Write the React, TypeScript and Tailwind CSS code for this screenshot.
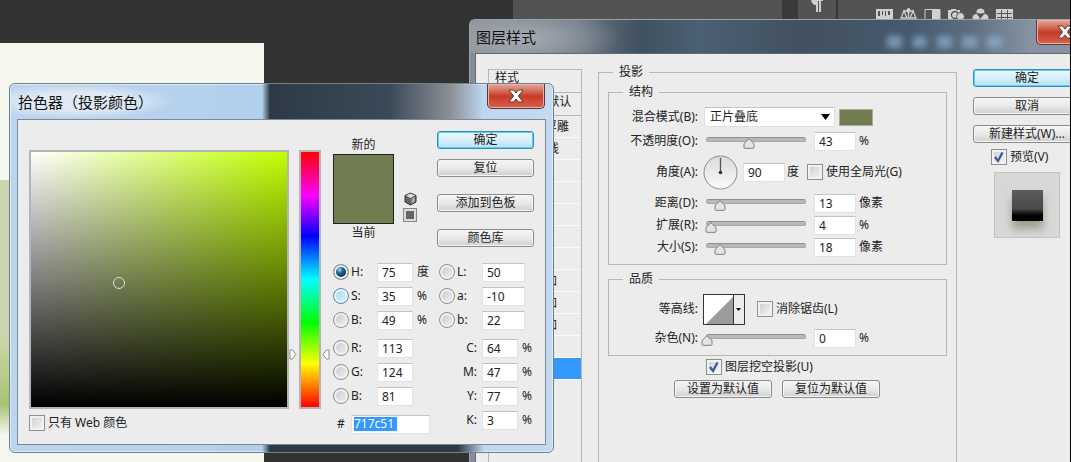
import { ReactNode, useState } from 'react'

const font = "font-['Noto_Sans','Noto_Sans_CJK_SC',sans-serif]"
const inputStyle = 'h-[19px] border border-[#e2e2e2] border-t-[#c4c4c4] bg-white px-1 text-[12px] leading-4 text-[#222] outline-none'

const CloseX = () => (
  <svg width="18" height="14" viewBox="0 0 18 14">
    <path d="M2 1h4.6L9 4l2.4-3H16l-4.6 6 4.6 6h-4.6L9 10l-2.4 3H2l4.6-6z" fill="#fff" stroke="#5c3a38" strokeWidth="1" />
  </svg>
)

const CloseButton = () => (
  <button aria-label="close" className="flex h-[25px] w-[58px] shrink-0 items-center justify-center rounded-b-[5px] border border-t-0 border-[#5f3634] bg-linear-to-b from-[#dfa89c] from-0% via-[#c63a24] via-50% to-[#d9604a] shadow-[inset_0_0_0_1px_#e9b3a8]">
    <CloseX />
  </button>
)

const Button = ({ children, primary }: { children: ReactNode, primary?: boolean }) => (
  <button className={primary
    ? 'h-[18px] w-full shrink-0 rounded-[3px] border border-[#2f8fbc] bg-linear-to-b from-[#eaf8fe] via-[#d8eff9] via-50% to-[#b5e1f4] text-[12px] leading-4 shadow-[inset_0_0_0_1px_#5fd0f5]'
    : 'h-[18px] w-full shrink-0 rounded-[3px] border border-[#8a8a8a] bg-linear-to-b from-[#f5f5f5] via-[#e9e9e9] via-50% to-[#cfcfcf] text-[12px] leading-4 whitespace-nowrap shadow-[inset_0_0_0_1px_#f6f6f6]'}>
    {children}
  </button>
)

const Checkbox = ({ label, checked = false }: { label: string, checked?: boolean }) => {
  const [on, setOn] = useState(checked)
  return (
    <label className="flex items-center gap-[3px] whitespace-nowrap">
      <span className="relative flex h-4 w-4 shrink-0">
        <input type="checkbox" checked={on} onChange={() => setOn(!on)} className="h-4 w-4 appearance-none border border-[#8e8f8f] bg-linear-to-br from-[#c8cdd4] to-[#f8f8f8] shadow-[inset_0_0_0_2px_#f1f1f1]" />
        {on && (
          <svg className="pointer-events-none absolute inset-0" width="16" height="16" viewBox="0 0 16 16">
            <path d="M4 8l3 4 4.500-8.500" fill="none" stroke="#3c559c" strokeWidth="2.200" />
          </svg>
        )}
      </span>
      {label}
    </label>
  )
}

const Slider = ({ label, value }: { label: string, value: number }) => {
  const [pos, setPos] = useState(value)
  return (
    <div className="relative h-[18px] w-[100px] shrink-0 pt-[5px]">
      <div className="h-[5px] rounded-full border border-t-[#8f8f8f] border-[#a6a6a6] bg-[#b9b9b9]" />
      <svg className="absolute top-[6px] -ml-[6px]" style={{ left: `${pos}%` }} width="12" height="11" viewBox="0 0 12 11">
        <path d="M6 .7L11 5.500v3.800q0 1-1 1H2q-1 0-1-1V5.500z" fill="#e4e4e4" stroke="#7d7d7d" />
      </svg>
      <input aria-label={label} type="range" value={pos} onChange={(e) => setPos(Number(e.target.value))} className="absolute inset-0 w-full opacity-0" />
    </div>
  )
}

const Group = ({ title, className, inner, children }: { title: string, className: string, inner?: boolean, children: ReactNode }) => (
  <fieldset className={`min-w-0 border border-[#b7b7b7] ${className}`}>
    <legend className={`px-[6px] text-[12px] leading-4 ${inner ? 'ml-[14px]' : 'ml-[5px]'}`}>{title}</legend>
    {children}
  </fieldset>
)

const SliderRow = ({ label, pos, value, unit }: { label: string, pos: number, value: string, unit: string }) => (
  <div className="flex h-[22px] items-center">
    <span className="w-[89px] shrink-0 text-right">{label}</span>
    <div className="ml-2"><Slider label={label} value={pos} /></div>
    <input aria-label={label} defaultValue={value} className={`${inputStyle} ml-2 w-[42px]`} />
    <span className="ml-[3px]">{unit}</span>
  </div>
)

const effects = [
  { name: '斜面和浮雕' },
  { name: '等高线', sub: true },
  { name: '' },
  { name: '' },
  { name: '' },
  { name: '' },
  { name: '' },
  { name: '颜色叠加' },
  { name: '渐变叠加' },
  { name: '图案叠加' },
  { name: '' },
  { name: '', active: true },
]

const EffectList = () => (
  <div className="w-[94px] shrink-0 overflow-hidden border border-[#b7b7b7]">
    <div className="h-[23px] border-b border-[#b7b7b7] pl-[6px] leading-4">样式</div>
    <div className="h-[23px] border-b border-[#b7b7b7] pl-[7px] leading-[18px] whitespace-nowrap">混合选项:默认</div>
    {effects.map((e, i) => (
      <div key={i} className={`flex h-[22px] items-center border-b border-[#fafafa] whitespace-nowrap ${e.sub ? 'pl-[34px]' : 'pl-[20px]'} ${e.active ? 'bg-[#3399ff] text-white' : ''}`}>
        {e.name}
      </div>
    ))}
  </div>
)

const AdjustmentIcons = () => (
  <div className="flex gap-[7px] pt-2 pl-[38px]">
    <svg width="17" height="14" viewBox="0 0 17 14" fill="#d0d0d0"><path fillRule="evenodd" d="M0 1h17v12H0zM2 3v5h2V3zm4 0v4h1V3zm3 0v5h1V3zm3 0v4h2V3z" /></svg>
    <svg width="17" height="14" viewBox="0 0 17 14" fill="none" stroke="#d0d0d0" strokeWidth="1.300"><path d="M8.500 0v12M3 3h11M4 3l-3 7h6zM13 3l-3 7h6zM6 12h5" /><circle cx="8.500" cy="2.500" r="1.500" fill="#d0d0d0" /></svg>
    <svg width="17" height="14" viewBox="0 0 17 14"><path d="M1 1.500h15v11H1z" fill="none" stroke="#d0d0d0" /><path d="M8 1h8v12H8z" fill="#d0d0d0" /></svg>
    <svg width="17" height="14" viewBox="0 0 17 14"><path d="M0 2h3V1h5v1h4v11H0z" fill="#d0d0d0" /><circle cx="7" cy="7" r="3.500" fill="none" stroke="#535353" strokeWidth="1.300" /><circle cx="12.500" cy="8.500" r="4" fill="#d0d0d0" stroke="#535353" /></svg>
    <svg width="17" height="14" viewBox="0 0 17 14" fill="#d0d0d0" stroke="#535353"><circle cx="8.500" cy="4.500" r="4.500" /><circle cx="4.500" cy="10" r="4.500" /><circle cx="12.500" cy="10" r="4.500" /><path d="M5.500 6h6l-3 4z" fill="#535353" /></svg>
    <svg width="17" height="14" viewBox="0 0 17 14"><path d="M0 1h17v12H0z" fill="#d0d0d0" /><path d="M1 5.500h15M1 9.500h15M5.500 2v10M11.500 2v10" stroke="#535353" /></svg>
  </div>
)

// document canvas and the docked panels behind the dialogs
const Workspace = () => (
  <div className="flex h-full">
    <div className="flex flex-1 pt-[43px]">
      <div className="w-[264px] bg-[#f6f7ee] pt-[137px]">
        <div className="h-[255px] bg-linear-to-b from-[#cbd7af] from-60% via-[#a9c373] via-88% to-[#f6f7ee]" />
      </div>
    </div>
    <div className="w-[269px] bg-[#535353]" />
    <div className="w-4 bg-[#3a3a3a]" />
    <div className="w-[38px] bg-[#535353] pl-[13px]">
      <svg width="13" height="13" viewBox="0 0 13 13"><path d="M0 0h12v1h-2v11H8V1H7v11H5V5Q1 5 0 0z" fill="#cfcfcf" /></svg>
    </div>
    <div className="w-[2px] bg-[#383838]" />
    <div className="w-[232px] bg-[#535353]"><AdjustmentIcons /></div>
  </div>
)

const LayerStyleDialog = () => (
  <div className="absolute top-[19px] -right-[29px] -bottom-[30px] left-[469px] flex flex-col rounded-t-[6px] border border-[#9aa3ab] bg-[linear-gradient(to_right,#868d96_0,#6b7783_110px,#40505f_170px,#4b6073_230px,#42505f_330px,#465a6e_440px,#5d6d7f_500px,#8593a3_560px,#8593a3)]">
    <div className="flex h-[33px] shrink-0 items-start justify-between bg-[radial-gradient(ellipse_100px_32px_at_50px_18px,#a8adb4,transparent)] pl-[6px]">
      <h1 className="pt-[6px] text-[15px] leading-[22px] text-[#111]">图层样式</h1>
      <div className="flex">
        <div className="mt-4 mr-[34px] flex gap-[10px] blur-[3px]">
          <i className="h-3 w-[15px] bg-[#8fb0d2]/70" />
          <i className="h-3 w-[15px] rounded-full bg-[#8fb0d2]/70" />
          <i className="h-3 w-[15px] bg-[#8fb0d2]/70" />
          <i className="h-3 w-[15px] bg-[#8fb0d2]/70" />
          <i className="h-3 w-[15px] bg-[#8fb0d2]/70" />
        </div>
        <div className="mr-1"><CloseButton /></div>
      </div>
    </div>
    <div className="mx-[5px] flex flex-1 gap-4 border border-[#5f6a75] bg-[#ececec] pt-[15px] pr-[11px] pl-3">
      <EffectList />
      <div className="-mt-[5px] flex flex-1 flex-col">
        <Group title="投影" className="flex-1 px-[9px]">
          <div className="flex flex-col gap-[6px] pt-1">
            <Group inner title="结构" className="pt-[6px] pb-[6px]">
              <div className="flex flex-col gap-[2px]">
                <div className="flex h-[22px] items-center">
                  <label htmlFor="blend" className="w-[89px] shrink-0 text-right">混合模式(B):</label>
                  <div className="relative ml-[6px]">
                    <select id="blend" className="block h-5 w-[131px] appearance-none border border-[#dedede] border-t-[#c4c4c4] bg-white px-[5px] text-[12px] leading-4">
                      <option>正片叠底</option>
                    </select>
                    <svg className="pointer-events-none absolute top-[7px] right-[5px]" width="9" height="6"><path d="M0 0h9L4.500 6z" /></svg>
                  </div>
                  <button aria-label="投影颜色" className="ml-1 h-[17px] w-[34px] border border-[#a9ab9f] bg-[#717c51]" />
                </div>
                <SliderRow label="不透明度(O):" pos={43} value="43" unit="%" />
                <div className="flex h-9 items-center">
                  <label htmlFor="angle" className="w-[89px] shrink-0 text-right">角度(A):</label>
                  <svg className="ml-[5px] shrink-0" width="35" height="35" viewBox="0 0 35 35">
                    <defs><linearGradient id="dial" x2="0" y2="1"><stop stopColor="#dadada" /><stop offset="1" stopColor="#fafafa" /></linearGradient></defs>
                    <circle cx="17.500" cy="17.500" r="16.500" fill="url(#dial)" stroke="#8c8c8c" />
                    <path d="M17.500 3v15" stroke="#555" strokeWidth="1.300" />
                    <circle cx="17.500" cy="17.500" r="1.800" fill="#333" />
                  </svg>
                  <input id="angle" defaultValue="90" className={`${inputStyle} ml-[5px] w-[42px]`} />
                  <span className="ml-[2px] mr-2">度</span>
                  <Checkbox label="使用全局光(G)" />
                </div>
                <div>
                  <SliderRow label="距离(D):" pos={14} value="13" unit="像素" />
                  <SliderRow label="扩展(R):" pos={5} value="4" unit="%" />
                  <SliderRow label="大小(S):" pos={14} value="18" unit="像素" />
                </div>
              </div>
            </Group>
            <Group inner title="品质" className="pt-[6px] pb-[6px]">
              <div className="flex flex-col gap-[2px]">
                <div className="flex h-8 items-center">
                  <span className="w-[89px] shrink-0 text-right">等高线:</span>
                  <button aria-label="等高线" className="ml-[5px] mr-3 flex h-[31px] w-[42px] border border-[#333] bg-white">
                    <svg width="40" height="29" viewBox="0 0 40 29">
                      <path d="M2 29L29 2v27z" fill="#9b9b9b" />
                      <path d="M29 0h11v29H29z" fill="#ececec" />
                      <path d="M29.500 0v29" stroke="#333" />
                      <path d="M32 13h5l-2.500 3z" />
                    </svg>
                  </button>
                  <Checkbox label="消除锯齿(L)" />
                </div>
                <SliderRow label="杂色(N):" pos={1} value="0" unit="%" />
              </div>
            </Group>
          </div>
          <div className="mt-[2px] ml-[98px] flex h-[18px]"><Checkbox checked label="图层挖空投影(U)" /></div>
          <div className="mt-1 ml-[66px] flex gap-[10px]">
            <div className="w-[98px]"><Button>设置为默认值</Button></div>
            <div className="w-[98px]"><Button>复位为默认值</Button></div>
          </div>
        </Group>
      </div>
      <div className="flex w-[108px] shrink-0 flex-col">
        <div className="flex flex-col gap-[10px]">
          <Button primary>确定</Button>
          <Button>取消</Button>
          <Button>新建样式(W)...</Button>
        </div>
        <div className="mt-[6px] ml-[18px] flex h-4"><Checkbox checked label="预览(V)" /></div>
        <div className="mt-[7px] ml-[21px] flex h-[66px] w-[66px] items-center justify-center border border-[#c3c3c3] bg-[#d7d7d7]">
          <div className="h-[31px] w-[31px] bg-linear-to-b from-[#5c5c5c] via-[#4a4a4a] via-60% to-black to-90% shadow-[0_8px_8px_#9da18e]" />
        </div>
      </div>
    </div>
  </div>
)

const Radio = ({ id, checked, hover }: { id: string, checked?: boolean, hover?: boolean }) => (
  <input
    type="radio" name="channel" id={id} defaultChecked={checked}
    className={`h-4 w-4 shrink-0 appearance-none rounded-full border shadow-[inset_0_0_0_2px_#f2f2f2] ${hover ? 'border-[#4a8fb5] bg-linear-to-br from-[#9bd9f7] to-[#dff4fd]' : 'border-[#8e8f8f] bg-linear-to-br from-[#c3c6ca] to-[#f4f4f4]'} checked:bg-[radial-gradient(circle_at_40%_35%,#9fe0f5_0,#1c6c96_25%,#0c2f4d_60%)]`}
  />
)

const channels = [
  [
    { id: 'h', label: 'H:', value: '75', unit: '度', checked: true },
    { id: 's', label: 'S:', value: '35', unit: '%', hover: true },
    { id: 'b', label: 'B:', value: '49', unit: '%' },
  ],
  [
    { id: 'r', label: 'R:', value: '113' },
    { id: 'g', label: 'G:', value: '124' },
    { id: 'bl', label: 'B:', value: '81' },
  ],
]
const lab = [
  { id: 'l', label: 'L:', value: '50' },
  { id: 'la', label: 'a:', value: '-10' },
  { id: 'lb', label: 'b:', value: '22' },
]
const cmyk = [['C:', '64'], ['M:', '47'], ['Y:', '77'], ['K:', '3']]

const ChannelRow = ({ c, wide }: { c: any, wide?: boolean }) => (
  <div className="flex h-6 items-center">
    <Radio id={c.id} checked={c.checked} hover={c.hover} />
    <label htmlFor={c.id} className={wide ? 'ml-[2px] w-[25px]' : 'ml-[2px] w-[26px]'}>{c.label}</label>
    <input aria-label={c.label} defaultValue={c.value} className={`${inputStyle} ${wide ? 'w-[43px]' : 'w-9'}`} />
    {c.unit && <span className="ml-1">{c.unit}</span>}
  </div>
)

const ColorPickerDialog = () => (
  <div className="absolute top-[83px] left-[9px] flex w-[545px] flex-col rounded-[6px] border border-[#6f7f8c] bg-linear-to-r from-[#bdd5ec] from-0% via-[#b0cfee] via-50% to-[#c3daf0] shadow-[inset_0_0_0_1px_#dfeaf5]">
    <div className="flex h-[35px] justify-between bg-[linear-gradient(to_right,transparent_252px,#2d3a46_260px,#3b4a58_380px,#8b8f95_440px,transparent_474px)] pl-2">
      <h1 className="-ml-2 bg-[radial-gradient(ellipse_at_40%,#e0eaf4_35%,transparent_70%)] pt-[7px] pr-6 pl-2 text-[15px] leading-[22px] text-[#111]">拾色器（投影颜色）</h1>
      <div className="mr-2"><CloseButton /></div>
    </div>
    <div className="mx-[7px] flex border border-[#7d8a96] bg-[#ececec] pr-[11px] pb-2 pl-[11px]">
      <div className="pt-[30px]">
        <div className="flex gap-[10px]">
          <div className="relative h-[259px] w-[260px] border-2 border-[#b4b4b4] bg-[linear-gradient(to_top,#000,transparent),linear-gradient(to_right,#fff,#bfff00)]">
            <div className="absolute top-[125px] left-[82px] h-3 w-3 rounded-full border border-[#ddd]" />
          </div>
          <div className="relative h-[259px] w-[22px] border-2 border-[#b4b4b4] bg-[linear-gradient(to_bottom,#f00,#f0f_17%,#00f_33%,#0ff_50%,#0f0_67%,#ff0_83%,#f00)]">
            <svg className="absolute top-[197px] -left-3" width="8" height="11" viewBox="0 0 8 11"><path d="M1 1h2.500L7 5.500 3.500 10H1z" fill="#fff" stroke="#8a8a8a" /></svg>
            <svg className="absolute top-[197px] -right-[11px]" width="8" height="11" viewBox="0 0 8 11"><path d="M7 1H4.500L1 5.500 4.500 10H7z" fill="#fff" stroke="#8a8a8a" /></svg>
          </div>
        </div>
        <div className="mt-[6px] flex h-4"><Checkbox label="只有 Web 颜色" /></div>
      </div>
      <div className="ml-3 flex-1">
        <div className="flex h-[140px] items-start">
          <div className="flex w-[61px] flex-col items-center pt-4">
            <span className="leading-[18px]">新的</span>
            <div className="h-[70px] w-full border border-[#222] bg-[#717c51]" />
            <span className="leading-[18px]">当前</span>
          </div>
          <div className="ml-[9px] flex w-[14px] flex-col items-center gap-[2px] pt-[72px]">
            <svg width="13" height="14" viewBox="0 0 13 14">
              <path d="M6.500 1L12 3.500v6.500l-5.500 3L1 10V3.500z" fill="#666" stroke="#333" />
              <path d="M6.500 1.500L11 3.600 6.500 6 2 3.600z" fill="#ddd" />
              <path d="M7.500 7l3.500-2v4.500L7.500 11.500z" fill="#aaa" />
            </svg>
            <button aria-label="web" className="flex h-[14px] w-[14px] items-center justify-center border border-[#888] bg-[#ddd]"><i className="h-2 w-2 bg-[#666]" /></button>
          </div>
          <div className="ml-5 flex flex-1 flex-col pt-[11px]">
            <div className="flex flex-col gap-[10px]">
              <Button primary>确定</Button>
              <Button>复位</Button>
            </div>
            <div className="mt-[17px] flex flex-col gap-[17px]">
              <Button>添加到色板</Button>
              <Button>颜色库</Button>
            </div>
          </div>
        </div>
        <div className="flex">
          <div className="w-[106px]">
            {channels.map((group, i) => (
              <div key={i} className="mb-1">
                {group.map((c) => <ChannelRow key={c.id} c={c} />)}
              </div>
            ))}
            <div className="flex h-6 items-center">
              <label htmlFor="hex" className="w-[18px] pl-1">#</label>
              <span className="flex h-[19px] w-[79px] items-center border border-[#e2e2e2] border-t-[#c4c4c4] bg-white pl-[2px]">
                <input id="hex" defaultValue="717c51" className="h-[14px] w-[43px] bg-[#3399ff] text-[12px] leading-[14px] text-white outline-none" />
              </span>
            </div>
          </div>
          <div>
            <div className="mb-1">
              {lab.map((c) => <ChannelRow key={c.id} c={c} wide />)}
            </div>
            {cmyk.map(([label, value]) => (
              <label key={label} className="flex h-6 items-center">
                <span className="mr-[5px] w-[38px] text-right">{label}</span>
                <input defaultValue={value} className={`${inputStyle} w-9`} />
                <span className="ml-1">%</span>
              </label>
            ))}
          </div>
        </div>
      </div>
    </div>
    <div className="h-[7px] rounded-b-[5px] bg-[linear-gradient(to_right,transparent_252px,#2d3a46_260px,#2d3a46_448px,transparent_474px)]" />
  </div>
)

export default function App() {
  return (
    <main className={`relative h-screen w-full overflow-hidden border-r border-black bg-[#333] text-[12px] leading-4 text-[#222] ${font}`}>
      <Workspace />
      <LayerStyleDialog />
      <ColorPickerDialog />
    </main>
  )
}
